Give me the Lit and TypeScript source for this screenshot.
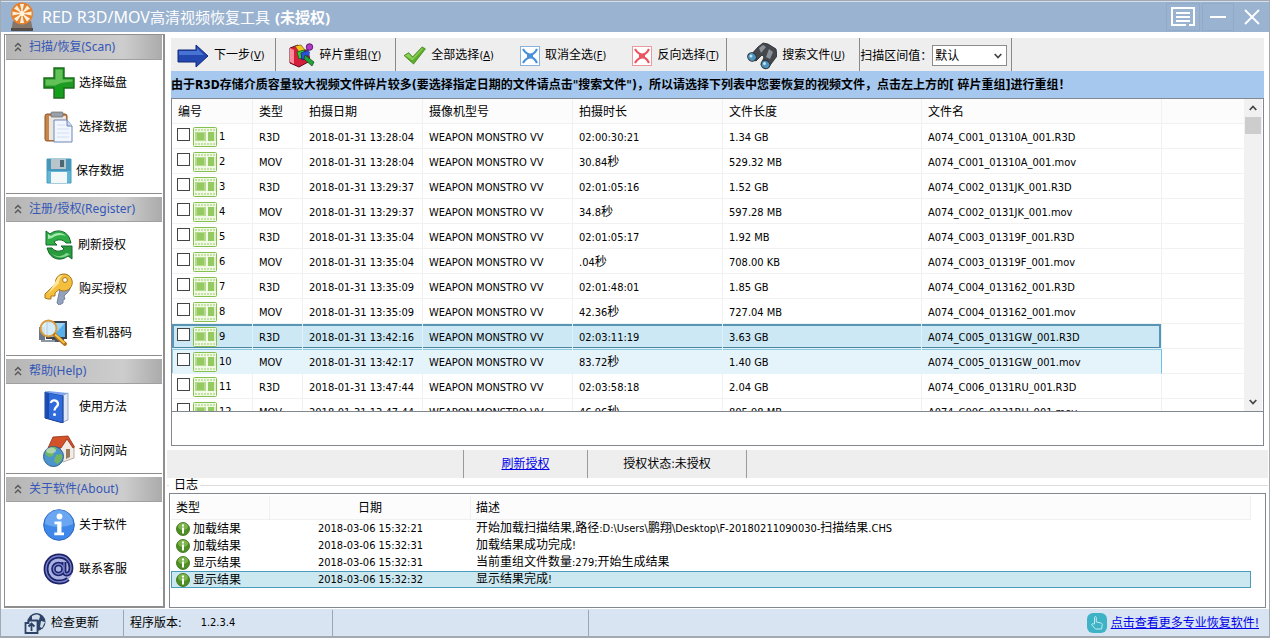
import { LitElement, html, css, svg, nothing } from "lit";
import { customElement, property, state } from "lit/decorators.js";
import { classMap } from "lit/directives/class-map.js";

/* Latin runs are set one size smaller than the Chinese glyphs beside them. */
const mixed = (text: string) =>
  text
    .split(/([\u0020-\u007e]+)/)
    .filter((part) => part !== "")
    .map((part) => (/^[\u0020-\u007e]+$/.test(part) ? html`<span class="lat">${part}</span>` : part));

const ICONS: Record<string, { w: number; h: number; box: string; art: unknown }> = {
  app: {
    w: 24, h: 30, box: "0 0 24 30",
    art: svg`<path d="M3 19h18l2 10H1z" fill="#85766c"/><path d="M1 26h22v3H1z" fill="#564d48"/>
      <circle cx="12" cy="11.500" r="11" fill="#e5822f"/>
      <g fill="#fdf0d8"><path d="M12 11.500L10 2h4zM12 11.500L10 21h4zM12 11.500L2.500 9.500v4zM12 11.500L21.500 9.500v4zM12 11.500L4 6.500l3-3zM12 11.500l8-5-3-3zM12 11.500l-8 5 3 3zM12 11.500l8 5-3 3z"/></g>
      <circle cx="12" cy="11.500" r="2.600" fill="#fff3dc"/>`,
  },
  plus: {
    w: 32, h: 32, box: "0 0 32 32",
    art: svg`<path d="M11 1h10v10h10v10H21v10H11V21H1V11h10z" fill="#1f9a22" stroke="#1c6b1e" stroke-width="1.4"/>
      <path d="M12.500 2.500h7v10h10v2q-14 1-17 4h-10v-6h10z" fill="#62c257"/><path d="M13 19h7v10h-7z" fill="#12a01a"/>`,
  },
  paste: {
    w: 32, h: 32, box: "0 0 32 32",
    art: svg`<rect x="2" y="3" width="22" height="27" rx="2" fill="#c98449" stroke="#8b5526"/>
      <rect x="6" y="5" width="17" height="24" fill="#e9e6e2"/><rect x="8" y="1" width="12" height="5" rx="1" fill="#9aa0a6" stroke="#656a70" stroke-width=".7"/>
      <path d="M11 9h13l5 6v16H11z" fill="#f2f6ff" stroke="#6f86b4"/><path d="M24 9v6h5" fill="#cbd9f3" stroke="#6f86b4"/>
      <path d="M14 14h8M14 18h12M14 22h12M14 26h12" stroke="#d3ddf0"/>`,
  },
  floppy: {
    w: 26, h: 26, box: "0 0 26 26",
    art: svg`<path d="M1 1h24v24H1z" fill="#62b6d6" stroke="#4b9cbd"/><path d="M1 1h24v12H1z" fill="#4795b8"/><rect x="5" y="1" width="15" height="10" fill="#b9c4cb"/>
      <rect x="14" y="2" width="4" height="7" fill="#4b6674"/><rect x="5" y="14" width="16" height="11" fill="#f4f7f8"/>`,
  },
  refresh: {
    w: 30, h: 32, box: "0 0 30 32",
    art: svg`<path d="M2 2l4 3c6-5 15-4 19 3l2 6h-5c-3-4-9-4-12-1l3 3H2z" fill="#2fae46" stroke="#12682a"/>
      <path d="M28 30l-4-3c-6 5-15 4-19-3l-2-5h5c3 4 9 4 12 1l-3-3h11z" fill="#2a9a3e" stroke="#12682a"/>
      <path d="M4 5l3 2c5-4 11-4 15 0-5-2-10-1-14 2l-4 1z" fill="#a9eab0"/><path d="M8 25c5 3 10 3 14-1l4 1c-5 4-13 5-18 0z" fill="#80d88e"/>`,
  },
  key: {
    w: 32, h: 32, box: "0 0 32 32",
    art: svg`<path d="M22 7a7 7 0 0 1 3 12l-4 4 1 3-2 1v3l-4 2-2-2 3-14z" fill="#93a3bd" stroke="#7383a0"/>
      <path d="M20 1a8.500 8.500 0 1 1-4 15.500L12 20v3H8v3H5l-3-1v-4L12.500 11A8.500 8.500 0 0 1 20 1z" fill="#f3bf3d" stroke="#a9741a"/>
      <circle cx="22" cy="7" r="2.400" fill="#fff" stroke="#a9741a"/><path d="M14 6c1-3 4-4 6-4-3 2-4 5-4 8L5 21z" fill="#ffe79a"/>`,
  },
  inspect: {
    w: 30, h: 28, box: "0 0 30 28",
    art: svg`<rect x="8" y="2" width="21" height="18" fill="#39424d"/><rect x="10" y="4" width="17" height="14" fill="#58b0ea"/>
      <path d="M10 4h17L14 18h-4z" fill="#9bd4f7"/><path d="M14 20h12v3H14z" fill="#4c5661"/><rect x="1" y="8" width="6" height="13" fill="#6b7887"/><path d="M3 21h14v2H3z" fill="#8c97a3"/>
      <circle cx="10.500" cy="9.500" r="8" fill="#d9eefa" fill-opacity=".9" stroke="#d99a3a" stroke-width="2"/>
      <path d="M17 16l10 9" stroke="#b4741a" stroke-width="4" stroke-linecap="round"/><path d="M17 15.500l9.500 8.500" stroke="#f6c34c" stroke-width="2"/>`,
  },
  book: {
    w: 32, h: 32, box: "0 0 32 32",
    art: svg`<path d="M20 4l5-2v27l-5 2z" fill="#dfe6f5" stroke="#8898bd" stroke-width=".8"/>
      <path d="M2 1l18 3.500V32L2 27z" fill="#2f6bdb" stroke="#123b92"/><path d="M3 2l3 .6v25L3 27z" fill="#1b4bb0"/>
      <path d="M2 1l3-1 20 2-5 2.500z" fill="#7da3ee"/><path d="M8 12c0-4 7-3.500 7 1 0 3-3.500 2.800-3.500 6.500" fill="none" stroke="#fff" stroke-width="2.300"/><circle cx="11.500" cy="23.500" r="1.500" fill="#fff"/>`,
  },
  home: {
    w: 32, h: 32, box: "0 0 32 32",
    art: svg`<path d="M17 12l7-8 7 8v11l-11 4-3-3z" fill="#f2ece6" stroke="#a79b91" stroke-width=".8"/>
      <path d="M10 2l15-1 6.500 11-1.500 1-6-9-6 9H5z" fill="#d4522a" stroke="#8f2e14" stroke-width=".8"/><path d="M23 14h4v8l-4 2z" fill="#9b7a5b"/>
      <circle cx="10.500" cy="21.500" r="10" fill="#4b94cc" stroke="#285d8d"/><path d="M4 15c4-4 9-4 10-1l-3 3-1 4-4 1-4-3zM13 20l6-1c1 4-1 8-5 10l-3-3z" fill="#6fb562"/>
      <ellipse cx="8" cy="15.500" rx="5" ry="3" fill="#fff" fill-opacity=".45"/>`,
  },
  about: {
    w: 32, h: 32, box: "0 0 32 32",
    art: svg`<circle cx="16" cy="16" r="15.300" fill="#3f87e8" stroke="#2b65bd"/><path d="M2 15a14 14 0 0 1 28 0c-9 4-19 4-28 0z" fill="#6ba6f2"/>
      <circle cx="16.500" cy="7.500" r="2.900" fill="#fff"/><path d="M11.500 12.500h7v11h2.500v2.800H11.300v-2.800h2.900v-8.200h-2.700z" fill="#fff"/>`,
  },
  at: {
    w: 32, h: 32, box: "0 0 32 32",
    art: svg`<circle cx="16" cy="16" r="14" fill="#aab2e4"/><circle cx="15.500" cy="16" r="5" fill="none" stroke="#1d2367" stroke-width="4.600"/>
      <path d="M21 9v9c0 5 7 4 7-3C28 8 23 3 16 3 8 3 3 9 3 16s5 13 13 13c4 0 7-1 9-3" fill="none" stroke="#1d2367" stroke-width="4.800"/>
      <circle cx="15.500" cy="16" r="5" fill="none" stroke="#7884cf" stroke-width="1.400"/>
      <path d="M21 9v9c0 5 7 4 7-3C28 8 23 3 16 3 8 3 3 9 3 16s5 13 13 13c4 0 7-1 9-3" fill="none" stroke="#7884cf" stroke-width="1.400"/>`,
  },
  next: {
    w: 32, h: 24, box: "0 0 32 24",
    art: svg`<path d="M1 6h18V1l12 11-12 11v-5H1z" fill="#2348b0" stroke="#13297a"/><path d="M2 7h18V4l7 7H2z" fill="#4873d2"/>`,
  },
  blocks: {
    w: 26, h: 26, box: "0 0 26 26",
    art: svg`<path d="M1 5l8-3v5l10 0 2 11-11 6-9-4z" fill="#d51f3a" stroke="#5d0c1c"/><path d="M1 5l4 2v14l-4-2z" fill="#ff8b9c"/>
      <path d="M6 3l6-1 4 5-6 2z" fill="#f4c41f" stroke="#6c5208" stroke-width=".7"/><path d="M8 9l7-2 3 6-8 3z" fill="#38c93c" stroke="#0d5a18" stroke-width=".7"/>
      <path d="M12 10l5-2 2 7-6 2z" fill="#2c50d8" stroke="#0c1c5e" stroke-width=".7"/><path d="M16 12l9 7-2 4-8-7z" fill="#23a33a" stroke="#0b4717" stroke-width=".7"/>
      <circle cx="20.500" cy="4" r="3.300" fill="#b437c9" stroke="#46104f" stroke-width=".8"/><path d="M18 7l3 2-1 4-4-2z" fill="#2c50d8"/>`,
  },
  check: {
    w: 23, h: 19, box: "0 0 24 20",
    art: svg`<path d="M1 10l5-3 4 4.500L20 1l3.500 2L11 19z" fill="#5cae2a" stroke="#3d7f18" stroke-width=".8"/><path d="M2 10l4-2 4 5L20 2l1 1-11 12z" fill="#8fd058"/>`,
  },
  crossBlue: {
    w: 20, h: 20, box: "0 0 20 20",
    art: svg`<rect x=".5" y=".5" width="19" height="19" fill="#fff" stroke="#86b2de"/><path d="M3 3q3 5 7 5.500T17 3M3 17q3-5 7-5.500t7 5.500" fill="none" stroke="#4a90d9" stroke-width="2.200"/><path d="M7 8h6v4H7z" fill="#4a90d9"/>`,
  },
  crossRed: {
    w: 20, h: 20, box: "0 0 20 20",
    art: svg`<rect x=".5" y=".5" width="19" height="19" fill="#fff" stroke="#e99a9f"/><path d="M3 3q3 5 7 5.500T17 3M3 17q3-5 7-5.500t7 5.500" fill="none" stroke="#ea5560" stroke-width="2.200"/><path d="M7 8h6v4H7z" fill="#ea5560"/>`,
  },
  binoculars: {
    w: 30, h: 28, box: "0 0 30 28",
    art: svg`<path d="M11 5l5-4 5 1 8 5 1 7-3 4-6 8-7-3 3-8-2-2-6 6-7-4z" fill="#44484d" stroke="#222528" stroke-width=".8"/>
      <path d="M12 6l4-3 3 2-5 6zM22 7l4 3-3 7-4-2z" fill="#8a9097"/><ellipse cx="5" cy="15" rx="4.500" ry="4" transform="rotate(40 5 15)" fill="#4d93bd" stroke="#2b3338"/>
      <ellipse cx="18.500" cy="22.500" rx="4.500" ry="4" transform="rotate(30 18.500 22.500)" fill="#4d93bd" stroke="#2b3338"/><circle cx="4" cy="14" r="1.500" fill="#bfe2f4"/><circle cx="17.500" cy="21.500" r="1.500" fill="#bfe2f4"/>`,
  },
  film: {
    w: 24, h: 20, box: "0 0 24 20",
    art: svg`<rect x=".5" y=".5" width="23" height="19" rx="1" fill="#f1f9e6" stroke="#84c04e"/>
      <path d="M2 3h20M2 17h20" stroke="#c3e2a3" stroke-width="2" stroke-dasharray="2 1"/>
      <rect x="2" y="5" width="11" height="9" fill="#b4db8c"/><rect x="4" y="6" width="7" height="7" fill="#95ca62"/><rect x="15" y="5" width="6" height="9" fill="#95ca62"/><path d="M22 5v9" stroke="#c9e6ac"/>`,
  },
  info: {
    w: 14, h: 14, box: "0 0 14 14",
    art: svg`<circle cx="7" cy="7" r="6.500" fill="#4d8f22" stroke="#35690f" stroke-width=".8"/><ellipse cx="7" cy="4.500" rx="5" ry="3.500" fill="#7db54c"/>
      <rect x="6" y="2.500" width="2" height="2" fill="#fff"/><rect x="6" y="5.500" width="2" height="6" fill="#fff"/>`,
  },
  update: {
    w: 22, h: 22, box: "0 0 22 22",
    art: svg`<circle cx="12.500" cy="10" r="9" fill="#2d4468"/><path d="M8 4c3-2 6-2 8 0l-1 4-3 1-4-1zM17 9l4 1-3 6-2-1z" fill="#d4deeb"/>
      <path d="M1.500 11h3V8.500h9V21H1.500z" fill="#d8e4f1" stroke="#2d4468" stroke-width="1.800"/><path d="M7.500 19v-7M4.500 14.500l3-3 3 3" fill="none" stroke="#2d4468" stroke-width="1.800"/>`,
  },
  hand: {
    w: 20, h: 20, box: "0 0 20 20",
    art: svg`<rect width="20" height="20" rx="6" fill="#3fb3c6"/><path d="M7.500 11V4.500c0-1.200 1.800-1.200 1.800 0V9l4.700 1c1 .3 1.300 1 1.200 2l-.6 4H8.500l-3.700-4c-.6-1 .6-1.700 1.400-1z" fill="none" stroke="#c2ebf0" stroke-width="1"/>`,
  },
  menu: {
    w: 24, h: 20, box: "0 0 24 20",
    art: svg`<path d="M15 18H1V1h22v17h-5" fill="none" stroke="#fff" stroke-width="2"/><path d="M5 6h14M5 10h14M5 14h14" stroke="#fff" stroke-width="2"/>`,
  },
  minimize: { w: 18, h: 18, box: "0 0 18 18", art: svg`<path d="M1 9h16" stroke="#fff" stroke-width="2"/>` },
  close: { w: 16, h: 16, box: "0 0 16 16", art: svg`<path d="M1 1l14 14M15 1L1 15" stroke="#fff" stroke-width="1.800"/>` },
  collapse: { w: 8, h: 10, box: "0 0 8 10", art: svg`<path d="M1 4.500l3-3 3 3M1 9l3-3 3 3" fill="none" stroke="#555" stroke-width="1.400"/>` },
  up: { w: 8, h: 6, box: "0 0 8 6", art: svg`<path d="M.7 5L4 1.500 7.300 5" fill="none" stroke="#444" stroke-width="1.700"/>` },
  down: { w: 8, h: 6, box: "0 0 8 6", art: svg`<path d="M.7 1L4 4.500 7.300 1" fill="none" stroke="#444" stroke-width="1.700"/>` },
};

const icon = (name: string) => {
  const i = ICONS[name];
  return html`<svg class="icon" width=${i.w} height=${i.h} viewBox=${i.box} aria-hidden="true">${i.art}</svg>`;
};

const shared = css`
  :host, * { box-sizing: border-box; }
  button, select, input { font: inherit; color: inherit; margin: 0; }
  button { border: 0; padding: 0; background: none; white-space: nowrap; }
  .icon { display: block; flex: none; }
  .lat { font-size: 11px; }
`;

@customElement("task-pane")
class TaskPane extends LitElement {
  @property() heading = "";
  @property({ attribute: false }) items: [string, string][] = [];
  @state() open = true;

  static styles = [shared, css`
    :host { display: block; border-bottom: 1px solid #8c8c8c; }
    :host([last]) { border-bottom: 0; }
    .head {
      display: flex; align-items: center; gap: 7px; width: 100%; height: 25px; padding: 0 8px;
      font: 12px/24px "Noto Sans", "Noto Sans CJK SC", sans-serif; color: #3457b8;
      background: linear-gradient(90deg, #b6b6b6, #cdcdcd 75%, #ababab);
      border-bottom: 1px solid #a0a0a0;
    }
    .items { display: flex; flex-direction: column; padding: 1px 0 0 2px; }
    .item { display: flex; align-items: center; justify-content: center; gap: 4px; height: 44px; }
  `];

  render() {
    return html`
      <button class="head" aria-expanded=${this.open} @click=${() => (this.open = !this.open)}>
        ${icon("collapse")}<span>${this.heading}</span>
      </button>
      ${this.open
        ? html`<div class="items">${this.items.map(([name, label]) => html`<button class="item">${icon(name)}<span>${label}</span></button>`)}</div>`
        : nothing}
    `;
  }
}

const FILES: string[][] = [
  ["1", "R3D", "2018-01-31 13:28:04", "02:00:30:21", "1.34 GB", "A074_C001_01310A_001.R3D"],
  ["2", "MOV", "2018-01-31 13:28:04", "30.84秒", "529.32 MB", "A074_C001_01310A_001.mov"],
  ["3", "R3D", "2018-01-31 13:29:37", "02:01:05:16", "1.52 GB", "A074_C002_0131JK_001.R3D"],
  ["4", "MOV", "2018-01-31 13:29:37", "34.8秒", "597.28 MB", "A074_C002_0131JK_001.mov"],
  ["5", "R3D", "2018-01-31 13:35:04", "02:01:05:17", "1.92 MB", "A074_C003_01319F_001.R3D"],
  ["6", "MOV", "2018-01-31 13:35:04", ".04秒", "708.00 KB", "A074_C003_01319F_001.mov"],
  ["7", "R3D", "2018-01-31 13:35:09", "02:01:48:01", "1.85 GB", "A074_C004_013162_001.R3D"],
  ["8", "MOV", "2018-01-31 13:35:09", "42.36秒", "727.04 MB", "A074_C004_013162_001.mov"],
  ["9", "R3D", "2018-01-31 13:42:16", "02:03:11:19", "3.63 GB", "A074_C005_0131GW_001.R3D"],
  ["10", "MOV", "2018-01-31 13:42:17", "83.72秒", "1.40 GB", "A074_C005_0131GW_001.mov"],
  ["11", "R3D", "2018-01-31 13:47:44", "02:03:58:18", "2.04 GB", "A074_C006_0131RU_001.R3D"],
  ["12", "MOV", "2018-01-31 13:47:44", "46.96秒", "805.98 MB", "A074_C006_0131RU_001.mov"],
];

@customElement("file-list")
class FileList extends LitElement {
  @state() selected = 8;
  @state() hovered = 9;

  static styles = [shared, css`
    :host { display: flex; min-height: 0; overflow: hidden; }
    .view { flex: 1; min-width: 0; overflow: hidden; }
    table { width: 100%; table-layout: fixed; border-collapse: separate; border-spacing: 0; }
    col.num { width: 81px; } col.type { width: 50px; } col.date { width: 120px; } col.cam { width: 150px; }
    col.dur { width: 150px; } col.len { width: 199px; } col.name { width: 240px; }
    th, td { height: 25px; padding: 2px 6px 0; text-align: left; font-weight: normal; white-space: nowrap; overflow: hidden; border-bottom: 1px solid #f1f1f1; border-right: 1px solid #f1f1f1; }
    th { background: #fcfcfc; }
    th:last-child, td:last-child { border-right: 0; }
    td.first { padding: 1px 0 0; }
    label { display: flex; align-items: center; gap: 2px; padding-left: 5px; height: 22px; }
    input { appearance: none; width: 13px; height: 13px; margin-bottom: 4px; margin-right: 1px; border: 1px solid #444; background: #fff; }
    input:checked { background: #4a90d9; }
    .selected td:not(:last-child) { background: #cbe8f4; border-color: #dff2fa; box-shadow: inset 0 2px #5795b4, inset 0 -1px #4d86a3; }
    .selected td:first-child { box-shadow: inset 2px 2px #5795b4, inset 0 -1px #4d86a3; }
    .selected td:nth-last-child(2) { box-shadow: inset -2px 2px #5795b4, inset 0 -1px #4d86a3; }
    .hovered td:not(:last-child) { background: #e5f3fb; box-shadow: inset 0 1px #8cc8e2; border-color: #e5f3fb; }
    .hovered td:first-child { box-shadow: inset 1px 1px #8cc8e2; }
    .hovered td:nth-last-child(2) { border-right-color: #70c0e7; }
    .bar { flex: none; width: 18px; display: flex; flex-direction: column; align-items: center; margin-right: 1px; background: #f1f1f1; }
    .bar button { display: grid; place-items: center; width: 100%; height: 18px; }
    .thumb { width: 16px; height: 17px; background: #cdcdcd; margin-bottom: auto; }
  `];

  render() {
    const head = ["编号", "类型", "拍摄日期", "摄像机型号", "拍摄时长", "文件长度", "文件名", ""];
    return html`
      <div class="view">
        <table>
          <colgroup><col class="num" /><col class="type" /><col class="date" /><col class="cam" /><col class="dur" /><col class="len" /><col class="name" /><col /></colgroup>
          <thead><tr>${head.map((h) => html`<th>${h}</th>`)}</tr></thead>
          <tbody>
            ${FILES.map(([n, type, date, dur, len, name], i) => html`
              <tr class=${classMap({ selected: i === this.selected, hovered: i === this.hovered && i !== this.selected })} @click=${() => (this.selected = i)}>
                <td class="first"><label><input type="checkbox" />${icon("film")}<span class="lat">${n}</span></label></td>
                ${[type, date, "WEAPON MONSTRO VV", dur, len, name].map((c) => html`<td>${mixed(c)}</td>`)}
                <td></td>
              </tr>`)}
          </tbody>
        </table>
      </div>
      <div class="bar">
        <button aria-label="向上滚动">${icon("up")}</button>
        <div class="thumb"></div>
        <button aria-label="向下滚动">${icon("down")}</button>
      </div>
    `;
  }
}

const LOGS: string[][] = [
  ["加载结果", "2018-03-06 15:32:21", "开始加载扫描结果,路径:D:\\Users\\鹏翔\\Desktop\\F-20180211090030-扫描结果.CHS"],
  ["加载结果", "2018-03-06 15:32:31", "加载结果成功完成!"],
  ["显示结果", "2018-03-06 15:32:31", "当前重组文件数量:279;开始生成结果"],
  ["显示结果", "2018-03-06 15:32:32", "显示结果完成!"],
];

@customElement("log-list")
class LogList extends LitElement {
  @state() selected = 3;

  static styles = [shared, css`
    :host { display: block; height: 115px; padding: 2px 14px 0 1px; border: 1px solid #828790; background: #fff; overflow: hidden; }
    table { width: 100%; table-layout: fixed; border-collapse: separate; border-spacing: 0; line-height: 16px; }
    col.type { width: 99px; } col.date { width: 201px; }
    th { height: 24px; padding: 0 5px; font-weight: normal; text-align: left; background: #fcfcfc; border-bottom: 1px solid #f0f0f0; border-right: 1px solid #f0f0f0; }
    td { height: 17px; padding: 0 5px; white-space: nowrap; overflow: hidden; }
    th:nth-child(2), td:nth-child(2) { text-align: center; }
    .kind { display: flex; align-items: center; gap: 3px; height: 17px; }
    .selected td { background: #cbe8f0; box-shadow: inset 0 1px #4a9cbc, inset 0 -1px #4a9cbc; }
    .selected td:first-child { box-shadow: inset 1px 1px #4a9cbc, inset 0 -1px #4a9cbc; }
    .selected td:last-child { box-shadow: inset -1px 1px #4a9cbc, inset 0 -1px #4a9cbc; }
  `];

  render() {
    return html`
      <table>
        <colgroup><col class="type" /><col class="date" /><col /></colgroup>
        <thead><tr><th>类型</th><th>日期</th><th>描述</th></tr></thead>
        <tbody>
          ${LOGS.map(([kind, date, text], i) => html`
            <tr class=${classMap({ selected: i === this.selected })} @click=${() => (this.selected = i)}>
              <td><div class="kind">${icon("info")}${kind}</div></td>
              <td>${mixed(date)}</td>
              <td>${mixed(text)}</td>
            </tr>`)}
        </tbody>
      </table>
    `;
  }
}

@customElement("app-root")
class AppRoot extends LitElement {
  static styles = [shared, css`
    :host {
      display: flex; flex-direction: column; height: 100vh; overflow: hidden; background: #fff; color: #000;
      font: 12px/16px "DejaVu Sans Condensed", "Noto Sans CJK SC", sans-serif;
      border: 1px solid #a3a9b0; border-bottom-width: 2px;
    }
    .title { display: flex; align-items: center; gap: 8px; flex: none; height: 31px; padding: 0 1px 0 9px; background: #9ab3d0; border-top: 1px solid #d4dfeb; color: #fff; }
    h1 { margin: 0; flex: 1; font: 15px/24px "Noto Sans", "Noto Sans CJK SC", sans-serif; white-space: nowrap; }
    h1 .big { font-size: 16px; }
    h1 .state { font-weight: bold; margin-left: 5px; }
    .window { display: flex; gap: 2px; }
    .window button { display: grid; place-items: center; width: 32px; height: 28px; border: 1px solid #92aac8; }
    .window button:first-child { width: 34px; }
    .window .close { border-color: transparent; }
    .body { display: flex; flex: 1; min-height: 0; padding: 2px 1px 1px 3px; gap: 2px; }
    nav { flex: none; display: flex; flex-direction: column; gap: 3px; width: 161px; border: 2px solid #8f8f8f; border-left: 1px solid #8f8f8f; border-top: 1px solid #8f8f8f; padding: 0 1px; }
    main { flex: 1; min-width: 0; display: flex; flex-direction: column; }
    .work { flex: 1; min-height: 0; display: flex; flex-direction: column; padding: 4px; }
    .toolbar { flex: none; display: flex; height: 33px; background: #eee; }
    .group { display: flex; align-items: center; padding: 2px 0 0; border-right: 1px solid #8a8a8a; }
    .group button { display: flex; align-items: center; gap: 5px; height: 31px; }
    .next { padding-left: 6px; padding-right: 10px; }
    .blocks { padding-left: 13px; padding-right: 14px; }
    .picks { padding-left: 7px; padding-right: 7px; gap: 26px; }
    .search { padding-left: 20px; padding-right: 14px; }
    .key { text-decoration: underline; }
    .range { padding-right: 4px; }
    .pick { display: grid; align-items: center; }
    .pick > * { grid-area: 1 / 1; }
    .pick .icon { justify-self: end; margin-right: 5px; pointer-events: none; }
    select { appearance: none; width: 75px; height: 21px; padding: 0 2px; border: 1px solid #8c8c8c; border-radius: 0; background: #fff; }
    .notice { flex: none; height: 27px; margin: 0; font-weight: bold; line-height: 28px; white-space: nowrap; overflow: hidden; background: #a6c8ee; }
    .files { flex: 1; min-height: 0; display: flex; flex-direction: column; border: 1px solid #828790; }
    file-list { flex: 1; border-bottom: 1px solid #828790; }
    .blank { flex: none; height: 33px; }
    .licence { flex: none; display: grid; grid-template-columns: 297px 124px 159px 1fr; height: 28px; background: #eee; }
    .licence > * { display: grid; place-items: center; border-right: 1px solid #9a9a9a; }
    .licence > :last-child { border-right: 0; }
    a { color: #0000e8; text-decoration: underline; }
    fieldset { flex: none; min-width: 0; margin: 0; padding: 0 2px 0 2px; border: 0; border-top: 1px solid #dcdcdc; }
    legend { padding: 0 2px 0 5px; line-height: 15px; }
    .status { flex: none; display: grid; grid-template-columns: 123px 209px 256px 1fr; height: 27px; padding-top: 1px; background: #d8e4f1; }
    .status > * { display: flex; align-items: center; gap: 6px; padding-left: 6px; border-right: 1px solid #9aa8b6; }
    .status > button { padding-left: 23px; gap: 5px; }
    .status .ver { gap: 19px; }
    .status > :last-child { border-right: 0; justify-content: flex-end; padding-right: 10px; gap: 4px; }
  `];

  private tool(name: string, label: string, key: string) {
    return html`<button>${icon(name)}<span>${label}<span class="lat">(<span class="key">${key}</span>)</span></span></button>`;
  }

  render() {
    return html`
      <header class="title">
        ${icon("app")}
        <h1><span class="big">RED R3D/MOV</span>高清视频恢复工具<span class="state">(未授权)</span></h1>
        <div class="window">
          <button aria-label="菜单">${icon("menu")}</button>
          <button aria-label="最小化">${icon("minimize")}</button>
          <button class="close" aria-label="关闭">${icon("close")}</button>
        </div>
      </header>
      <div class="body">
        <nav>
          <task-pane heading="扫描/恢复(Scan)" .items=${[["plus", "选择磁盘"], ["paste", "选择数据"], ["floppy", "保存数据"]]}></task-pane>
          <task-pane heading="注册/授权(Register)" .items=${[["refresh", "刷新授权"], ["key", "购买授权"], ["inspect", "查看机器码"]]}></task-pane>
          <task-pane heading="帮助(Help)" .items=${[["book", "使用方法"], ["home", "访问网站"]]}></task-pane>
          <task-pane last heading="关于软件(About)" .items=${[["about", "关于软件"], ["at", "联系客服"]]}></task-pane>
        </nav>
        <main>
          <section class="work">
            <div class="toolbar">
              <div class="group next">${this.tool("next", "下一步", "V")}</div>
              <div class="group blocks">${this.tool("blocks", "碎片重组", "Y")}</div>
              <div class="group picks">
                ${this.tool("check", "全部选择", "A")}${this.tool("crossBlue", "取消全选", "F")}${this.tool("crossRed", "反向选择", "T")}
              </div>
              <div class="group search">${this.tool("binoculars", "搜索文件", "U")}</div>
              <div class="group range">
                <label for="range">扫描区间值：</label>
                <div class="pick"><select id="range"><option>默认</option></select>${icon("down")}</div>
              </div>
            </div>
            <p class="notice">由于R3D存储介质容量较大视频文件碎片较多(要选择指定日期的文件请点击"搜索文件")，所以请选择下列表中您要恢复的视频文件，点击左上方的[ 碎片重组]进行重组！</p>
            <div class="files">
              <file-list></file-list>
              <div class="blank"></div>
            </div>
          </section>
          <div class="licence">
            <span></span>
            <span><a href="#licence">刷新授权</a></span>
            <span>授权状态:未授权</span>
            <span></span>
          </div>
          <fieldset>
            <legend>日志</legend>
            <log-list></log-list>
          </fieldset>
        </main>
      </div>
      <footer class="status">
        <button>${icon("update")}检查更新</button>
        <span class="ver"><span>程序版本:</span><span class="lat">1.2.3.4</span></span>
        <span></span>
        <span>${icon("hand")}<a href="#more">点击查看更多专业恢复软件!</a></span>
      </footer>
    `;
  }
}
